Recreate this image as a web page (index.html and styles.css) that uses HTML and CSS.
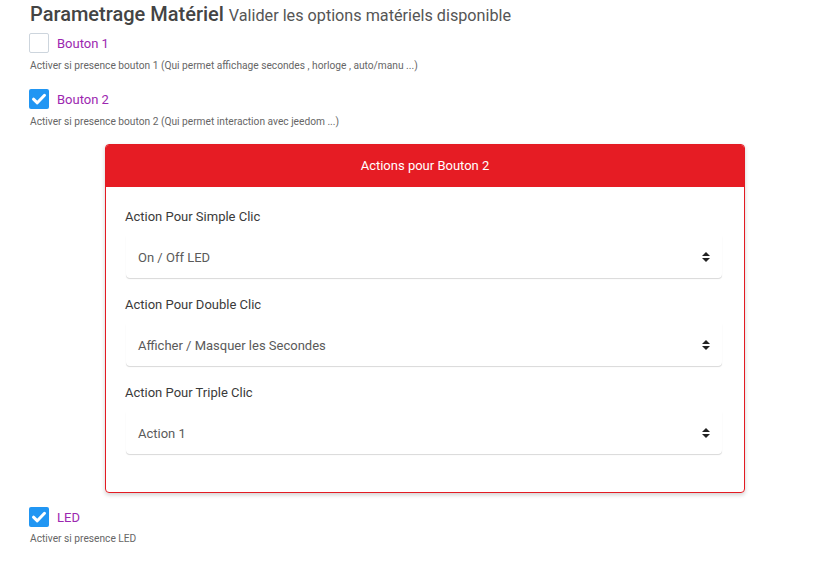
FILE: index.html
```html
<!DOCTYPE html>
<html lang="fr">
<head>
<meta charset="UTF-8" />
<title>Parametrage Matériel</title>
<link rel="stylesheet" href="styles.css">
</head>
<body>
<div id="page">
  <h1 class="title">Parametrage Matériel <small>Valider les options matériels disponible</small></h1>

  <div class="option">
    <label class="check-row">
      <span class="box"></span>
      <span class="check-label">Bouton 1</span>
    </label>
    <div class="help">Activer si presence bouton 1 (Qui permet affichage secondes , horloge , auto/manu ...)</div>
  </div>

  <div class="option">
    <label class="check-row">
      <span class="box checked">
        <svg viewBox="0 0 20 20" width="20" height="20"><path d="M4.5 10.2 L8.3 13.8 L15.5 6.3" fill="none" stroke="#fff" stroke-width="3" stroke-linecap="round" stroke-linejoin="round"/></svg>
      </span>
      <span class="check-label">Bouton 2</span>
    </label>
    <div class="help">Activer si presence bouton 2 (Qui permet interaction avec jeedom ...)</div>
  </div>

  <div class="card">
    <div class="card-header">Actions pour Bouton 2</div>
    <div class="card-body">
      <div class="field">
        <div class="field-label">Action Pour Simple Clic</div>
        <div class="select">
          <span>On / Off LED</span>
          <svg class="arrows" viewBox="0 0 8 10" width="8" height="10"><path d="M0 4 L4 0 L8 4 Z M0 6 L8 6 L4 10 Z" fill="#222"/></svg>
        </div>
      </div>
      <div class="field">
        <div class="field-label">Action Pour Double Clic</div>
        <div class="select">
          <span>Afficher / Masquer les Secondes</span>
          <svg class="arrows" viewBox="0 0 8 10" width="8" height="10"><path d="M0 4 L4 0 L8 4 Z M0 6 L8 6 L4 10 Z" fill="#222"/></svg>
        </div>
      </div>
      <div class="field">
        <div class="field-label">Action Pour Triple Clic</div>
        <div class="select">
          <span>Action 1</span>
          <svg class="arrows" viewBox="0 0 8 10" width="8" height="10"><path d="M0 4 L4 0 L8 4 Z M0 6 L8 6 L4 10 Z" fill="#222"/></svg>
        </div>
      </div>
    </div>
  </div>

  <div class="option led">
    <label class="check-row">
      <span class="box checked">
        <svg viewBox="0 0 20 20" width="20" height="20"><path d="M4.5 10.2 L8.3 13.8 L15.5 6.3" fill="none" stroke="#fff" stroke-width="3" stroke-linecap="round" stroke-linejoin="round"/></svg>
      </span>
      <span class="check-label">LED</span>
    </label>
    <div class="help">Activer si presence LED</div>
  </div>
</div>
</body>
</html>
```

FILE: styles.css
```css
html, body {
  margin: 0;
  padding: 0;
  background: #fff;
  font-family: Roboto, 'Liberation Sans', Arial, sans-serif;
}
#page {
  padding: 2px 0 0 30px;
}
.title {
  margin: 0;
  font-size: 20px;
  line-height: 24px;
  font-weight: 500;
  color: #444;
}
.title small {
  font-size: 16.2px;
  font-weight: 400;
  color: #555;
}
.option {
  margin-top: 5px;
}
.option + .option {
  margin-top: 16px;
}
.check-row {
  display: flex;
  align-items: center;
  gap: 8px;
  margin-left: -1px;
}
.box {
  width: 20px;
  height: 20px;
  box-sizing: border-box;
  border: 1.5px solid #cdd5dd;
  border-radius: 2px;
  display: flex;
}
.box.checked {
  background: #2196f3;
  border: none;
}
.check-label {
  font-size: 13px;
  color: #9c27b0;
}
.help {
  font-size: 10.2px;
  color: #666;
  line-height: 14px;
  margin-top: 6px;
}
.card {
  width: 640px;
  box-sizing: border-box;
  margin: 15px 0 0 75px;
  border: 1px solid #e31b23;
  border-radius: 4px;
  box-shadow: 0 2px 4px rgba(0,0,0,0.18);
  overflow: hidden;
}
.card-header {
  background: #e61c24;
  color: #fff;
  font-size: 13px;
  height: 43px;
  line-height: 43px;
  margin-top: -1px;
  text-align: center;
}
.card-body {
  padding: 21px 22px 38px 19px;
}
.field + .field {
  margin-top: 18px;
}
.field-label {
  font-size: 13px;
  line-height: 18px;
  color: #3a3a3a;
}
.select {
  margin: 10px 0 0 1px;
  height: 42px;
  display: flex;
  align-items: center;
  justify-content: space-between;
  padding: 0 12px 0 12px;
  border-radius: 0 0 4px 4px;
  box-shadow: 0 1px 0 #dcdcdc, 0 1px 2px rgba(0,0,0,0.06);
  font-size: 13px;
  color: #5a5a5a;
}
.arrows {
  display: block;
}
.option.led {
  margin-top: 14px;
}
.option.led .help {
  margin-top: 5px;
}
```
